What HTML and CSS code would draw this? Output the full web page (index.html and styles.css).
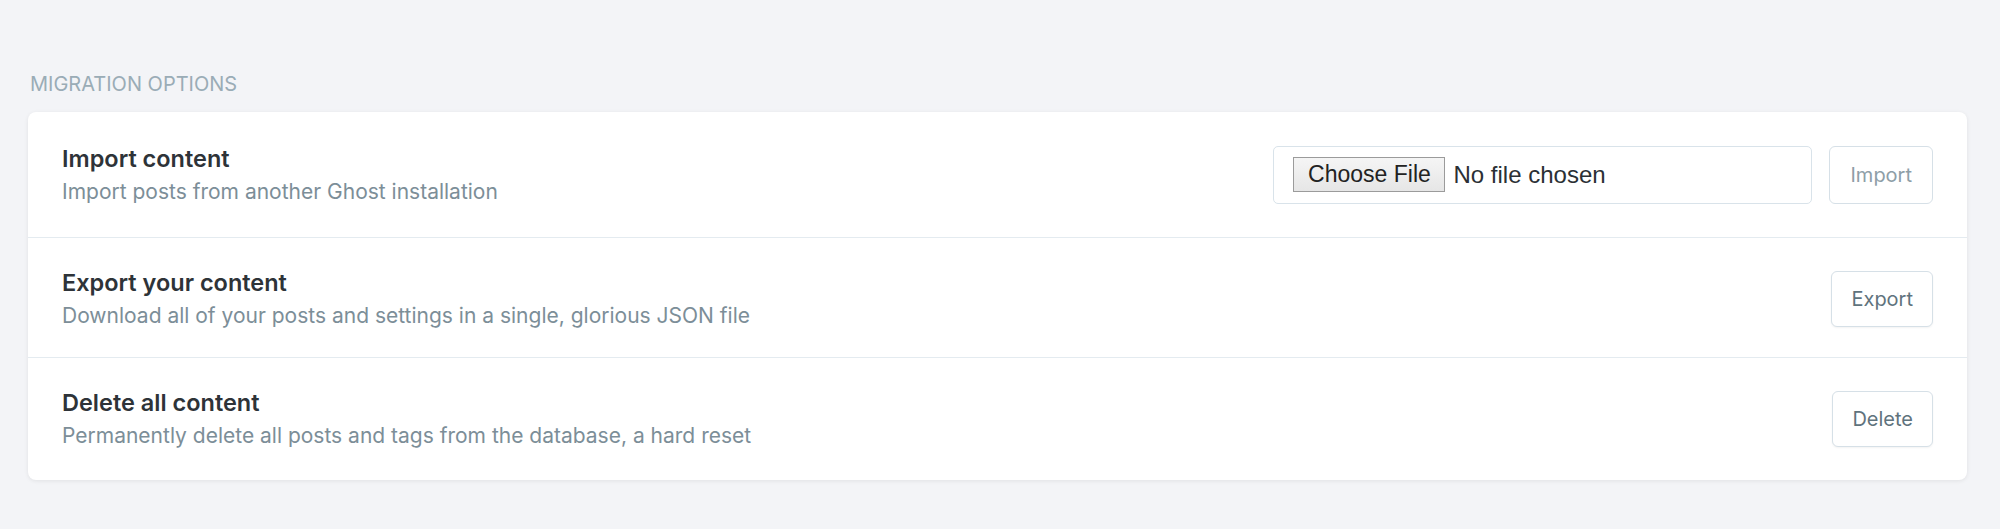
FILE: index.html
```html
<!DOCTYPE html>
<html lang="en">
<head>
    <meta charset="UTF-8">
    <meta name="viewport" content="width=device-width, initial-scale=1.0">
    <title>Labs - Migration options</title>
    <link rel="stylesheet" href="styles.css">
</head>
<body>
    <div class="settings">
        <h4 class="section-title">Migration options</h4>
        <div class="card">
            <div class="setting">
                <div class="setting-text">
                    <div class="setting-name">Import content</div>
                    <div class="setting-desc">Import posts from another Ghost installation</div>
                </div>
                <div class="setting-action import-group">
                    <label class="file-picker">
                        <input type="file" class="file-input">
                        <span class="file-btn">Choose File</span>
                        <span class="file-name">No file chosen</span>
                    </label>
                    <button class="btn btn-disabled">Import</button>
                </div>
            </div>
            <div class="setting">
                <div class="setting-text">
                    <div class="setting-name">Export your content</div>
                    <div class="setting-desc">Download all of your posts and settings in a single, glorious JSON file</div>
                </div>
                <div class="setting-action">
                    <button class="btn">Export</button>
                </div>
            </div>
            <div class="setting">
                <div class="setting-text">
                    <div class="setting-name">Delete all content</div>
                    <div class="setting-desc">Permanently delete all posts and tags from the database, a hard reset</div>
                </div>
                <div class="setting-action">
                    <button class="btn">Delete</button>
                </div>
            </div>
        </div>
    </div>
</body>
</html>
```

FILE: styles.css
```css
body {
    font-family: Inter, "Noto Sans", sans-serif;
    margin: 0;
    padding: 0;
    background: #f3f4f7;
    color: #2b3035;
}
.settings {
    padding: 72px 33px 48px 28px;
}
.section-title {
    margin: 0 0 16px 2px;
    font-size: 20px;
    font-weight: 400;
    line-height: 24px;
    text-transform: uppercase;
    color: #9aacb6;
}
.card {
    background: #fff;
    border-radius: 8px;
    box-shadow: 0 1px 4px rgba(0, 0, 0, 0.08);
}
.setting {
    display: flex;
    align-items: center;
    justify-content: space-between;
    padding: 29px 34px 27px;
    border-bottom: 1px solid #e4ebf0;
}
.setting:first-child {
    padding-top: 31px;
    padding-bottom: 31px;
}
.setting:last-child {
    border-bottom: none;
    padding-bottom: 30px;
}
.setting-name {
    font-size: 23.5px;
    font-weight: 600;
    line-height: 32px;
    color: #2e3338;
}
.setting-desc {
    margin-top: 3px;
    font-size: 21px;
    line-height: 28px;
    color: #7c8e98;
}
.setting-action {
    display: flex;
}
.import-group {
    gap: 17px;
    align-items: stretch;
}
/* file picker */
.file-picker {
    display: flex;
    align-items: center;
    width: 539px;
    height: 58px;
    box-sizing: border-box;
    padding-left: 19px;
    border: 1px solid #d9e3ea;
    border-radius: 5px;
    font-family: "Liberation Sans", Arial, sans-serif;
    font-size: 23px;
    color: #222;
    cursor: pointer;
}
.file-input {
    display: none;
}
.file-btn {
    display: inline-block;
    width: 152px;
    height: 35px;
    box-sizing: border-box;
    line-height: 33px;
    text-align: center;
    border: 1px solid #9b9b9b;
    background: linear-gradient(#f5f5f5, #e6e6e6);
}
.file-name {
    margin-left: 8px;
    color: #2b3035;
    font-size: 24px;
}
.btn {
    height: 56px;
    padding: 0 19px;
    font-family: Inter, "Noto Sans", sans-serif;
    font-size: 20px;
    color: #5f737d;
    background: #fff;
    border: 1px solid #d6e0e7;
    border-radius: 6px;
    box-shadow: 0 1px 2px rgba(0, 0, 0, 0.05);
    cursor: pointer;
}
.btn-disabled {
    height: auto;
    padding: 0 20px;
    color: #8e9ea7;
    box-shadow: none;
}
```
